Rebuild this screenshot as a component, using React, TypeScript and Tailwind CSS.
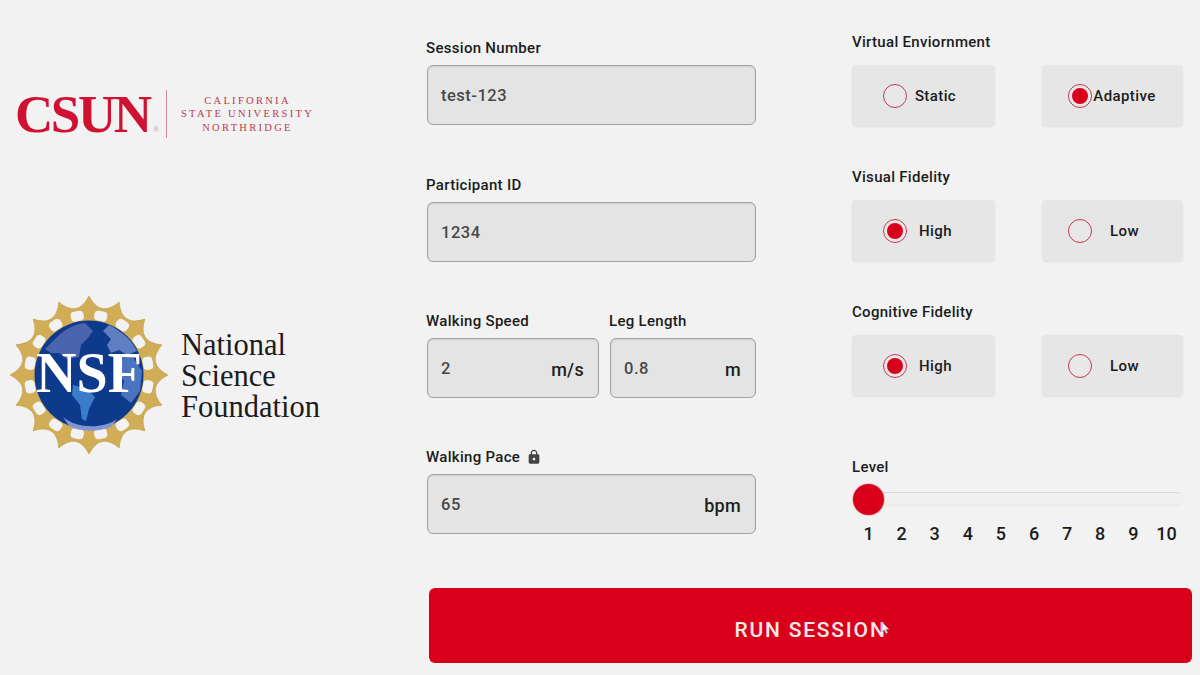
import { MdLock } from "react-icons/md";

// scalloped gold ring round the NSF globe
function ringPath() {
  const cx = 80;
  const cy = 80;
  let d = "";
  for (let i = 0; i < 16; i++) {
    const a = (i * Math.PI) / 8 - Math.PI / 2;
    const m = a + Math.PI / 16;
    const b = a + Math.PI / 8;
    const t1 = [cx + 79 * Math.cos(a), cy + 79 * Math.sin(a)];
    const c = [cx + 58 * Math.cos(m), cy + 58 * Math.sin(m)];
    const t2 = [cx + 79 * Math.cos(b), cy + 79 * Math.sin(b)];
    if (i === 0) d += `M${t1[0].toFixed(1)} ${t1[1].toFixed(1)}`;
    d += `Q${c[0].toFixed(1)} ${c[1].toFixed(1)} ${t2[0].toFixed(1)} ${t2[1].toFixed(1)}`;
  }
  return d + "Z";
}

function NsfEmblem() {
  const holes = Array.from({ length: 16 }, (_, i) => i * 22.5 + 11.25);
  return (
    <svg width="160" height="160" viewBox="0 0 160 160" className="shrink-0">
      <path d={ringPath()} fill="#d2ad58" stroke="#b8923a" strokeWidth="0.5" />
      {holes.map((h) => (
        <rect
          key={h}
          x="73.5"
          y="15"
          width="13"
          height="10"
          rx="4"
          fill="#f2f2f2"
          transform={`rotate(${h} 80 80)`}
        />
      ))}
      <circle cx="80" cy="80" r="54.5" fill="#0e3a8c" />
      <path d="M48 42C56 34 66 29 76 28L84 36 78 44 72 50 70 62 58 64 50 58 42 58 36 54Z" fill="#4a64ad" />
      <path d="M100 30C112 36 122 44 128 56L118 60 110 55 102 58 98 50 102 44 94 36Z" fill="#5f7fc2" />
      <path d="M110 64L124 62 133 76 131 96 122 108 112 100 115 86 108 76Z" fill="#4a74bf" />
      <path d="M64 90L78 94 86 102 80 114 77 126 73 124 71 110 63 100Z" fill="#3a7cc8" />
      <path d="M54 122C68 134 94 134 108 124L102 132C90 137 70 137 60 131Z" fill="#8096d0" />
      <text
        x="80"
        y="97"
        textAnchor="middle"
        fill="#ffffff"
        fontSize="56"
        fontWeight="700"
        fontFamily="'Liberation Serif', serif"
      >
        NSF
      </text>
    </svg>
  );
}

function Logos() {
  return (
    <aside className="w-[427px] shrink-0 font-['Liberation_Serif',serif]">
      <div className="ml-[15px] mt-[90px] flex h-[48px] items-center">
        <div className="relative w-[138px] text-[53px] leading-[48px] font-bold tracking-[-2.4px] text-[#cf1232]">
          CSUN
          <span className="absolute left-[138px] top-[36px] text-[8px] font-normal leading-none tracking-normal text-[#b9a0a4]">®</span>
        </div>
        <div className="ml-[13px] h-[48px] w-px bg-[#d58a98]" />
        <div className="ml-[13px] w-[135px] whitespace-nowrap text-center text-[10.5px] leading-[13.5px] tracking-[2.3px] text-[#b5404f]">
          <div>CALIFORNIA</div>
          <div>STATE UNIVERSITY</div>
          <div>NORTHRIDGE</div>
        </div>
      </div>
      <div className="ml-[9px] mt-[157px] flex items-center">
        <NsfEmblem />
        <div className="ml-[12px] pt-[2px] text-[30.5px] leading-[31px] text-[#1c1c1c]">
          <div>National</div>
          <div>Science</div>
          <div>Foundation</div>
        </div>
      </div>
    </aside>
  );
}

function Field({ value, unit }: { value: string; unit?: string }) {
  return (
    <div className="mt-[8px] flex h-[60px] items-center justify-between rounded-[6px] border-[1.5px] border-[#a2a2a2] bg-[#e4e4e4] pl-[13px] pr-[14px] pt-[3px] font-medium shadow-[inset_0_1px_2px_rgba(0,0,0,0.1)]">
      <span className="text-[16.5px] tracking-[0.5px] text-[#484848]">{value}</span>
      {unit && <span className="text-[18px] tracking-[0.3px] text-[#1f1f1f]">{unit}</span>}
    </div>
  );
}

function Label({ children, form }: { children: React.ReactNode; form?: boolean }) {
  return (
    <div className={`h-[18px] text-[15px] leading-[18px] font-medium tracking-[0.3px] text-[#1c1c1c] ${form ? "-ml-px" : ""}`}>
      {children}
    </div>
  );
}

function Radio({ text, checked, right }: { text: string; checked?: boolean; right?: boolean }) {
  return (
    <div
      className={`flex h-[61px] items-center rounded-[4px] bg-[#e6e6e6] shadow-[0_1px_2px_rgba(0,0,0,0.08)] ${right ? "w-[141px] pl-[26px]" : "w-[143px] pl-[31px]"}`}
    >
      <span className="flex h-[24px] w-[24px] shrink-0 items-center justify-center rounded-full border-[1.5px] border-[#c23a52] bg-[#e8e8e8]">
        {checked && <span className="h-[16px] w-[16px] rounded-full bg-[#d9001b]" />}
      </span>
      <span className={`pt-[2px] text-center text-[15px] font-medium tracking-[0.4px] text-[#1c1c1c] ${right ? "w-[65px]" : "w-[57px]"}`}>
        {text}
      </span>
    </div>
  );
}

function RadioGroup({ title, children }: { title: string; children: React.ReactNode }) {
  return (
    <div className="h-[135px]">
      <Label>{title}</Label>
      <div className="mt-[14px] flex justify-between">{children}</div>
    </div>
  );
}

function LevelSlider() {
  const levels = [1, 2, 3, 4, 5, 6, 7, 8, 9, 10];
  return (
    <div className="mt-[20px]">
      <Label>Level</Label>
      <div className="relative ml-[16px] mt-[16px] h-[12px] rounded-full border-t border-[#d9d9d9] bg-[#f0f0f0] shadow-[0_2px_3px_rgba(0,0,0,0.03)]">
        <div className="absolute left-[-15px] top-[-9px] h-[31px] w-[31px] rounded-full bg-[#d9001b] shadow-[0_0_0_1px_rgba(217,0,27,0.2)]" />
      </div>
      <div className="mt-[18px] flex text-[18px] font-medium leading-[24px] text-[#1c1c1c]">
        {levels.map((n) => (
          <span key={n} className="w-[33.2px] text-center">{n}</span>
        ))}
      </div>
    </div>
  );
}

export default function App() {
  return (
    <div className="flex h-[675px] w-[1200px] overflow-hidden bg-[#f2f2f2] font-['Roboto',sans-serif]">
      <Logos />
      <main className="w-[773px]">
        <div className="flex h-[549px] pt-[39px]">
          <section className="w-[329px]">
            <div className="h-[137px]">
              <Label form>Session Number</Label>
              <Field value="test-123" />
            </div>
            <div className="h-[136px]">
              <Label form>Participant ID</Label>
              <Field value="1234" />
            </div>
            <div className="flex h-[136px] gap-[11px]">
              <div className="w-[172px]">
                <Label form>Walking Speed</Label>
                <Field value="2" unit="m/s" />
              </div>
              <div className="w-[146px]">
                <Label form>Leg Length</Label>
                <Field value="0.8" unit="m" />
              </div>
            </div>
            <div>
              <Label form>
                <span className="flex items-center gap-[6px]">
                  Walking Pace <MdLock className="text-[16px] text-[#444444]" />
                </span>
              </Label>
              <Field value="65" unit="bpm" />
            </div>
          </section>
          <section className="ml-[96px] mt-[-6px] w-[331px]">
            <RadioGroup title="Virtual Enviornment">
              <Radio text="Static" />
              <Radio text="Adaptive" checked right />
            </RadioGroup>
            <RadioGroup title="Visual Fidelity">
              <Radio text="High" checked />
              <Radio text="Low" right />
            </RadioGroup>
            <RadioGroup title="Cognitive Fidelity">
              <Radio text="High" checked />
              <Radio text="Low" right />
            </RadioGroup>
            <LevelSlider />
          </section>
        </div>
        <div className="relative ml-[2px] mt-[39px] flex h-[75px] w-[763px] items-center justify-center rounded-[6px] bg-[#d9001b] pt-[10px] text-[21px] font-medium tracking-[1.8px] text-[#f7e9ec]">
          RUN SESSION
          <svg width="9" height="14" viewBox="0 0 9 14" className="absolute left-[452px] top-[33px]">
            <path d="M1 1v10l2.4-2.2L5 12.5l1.6-.7-1.6-3.5h3z" fill="#f2f2f2" stroke="#9a8a8c" strokeWidth="0.6" />
          </svg>
        </div>
      </main>
    </div>
  );
}
